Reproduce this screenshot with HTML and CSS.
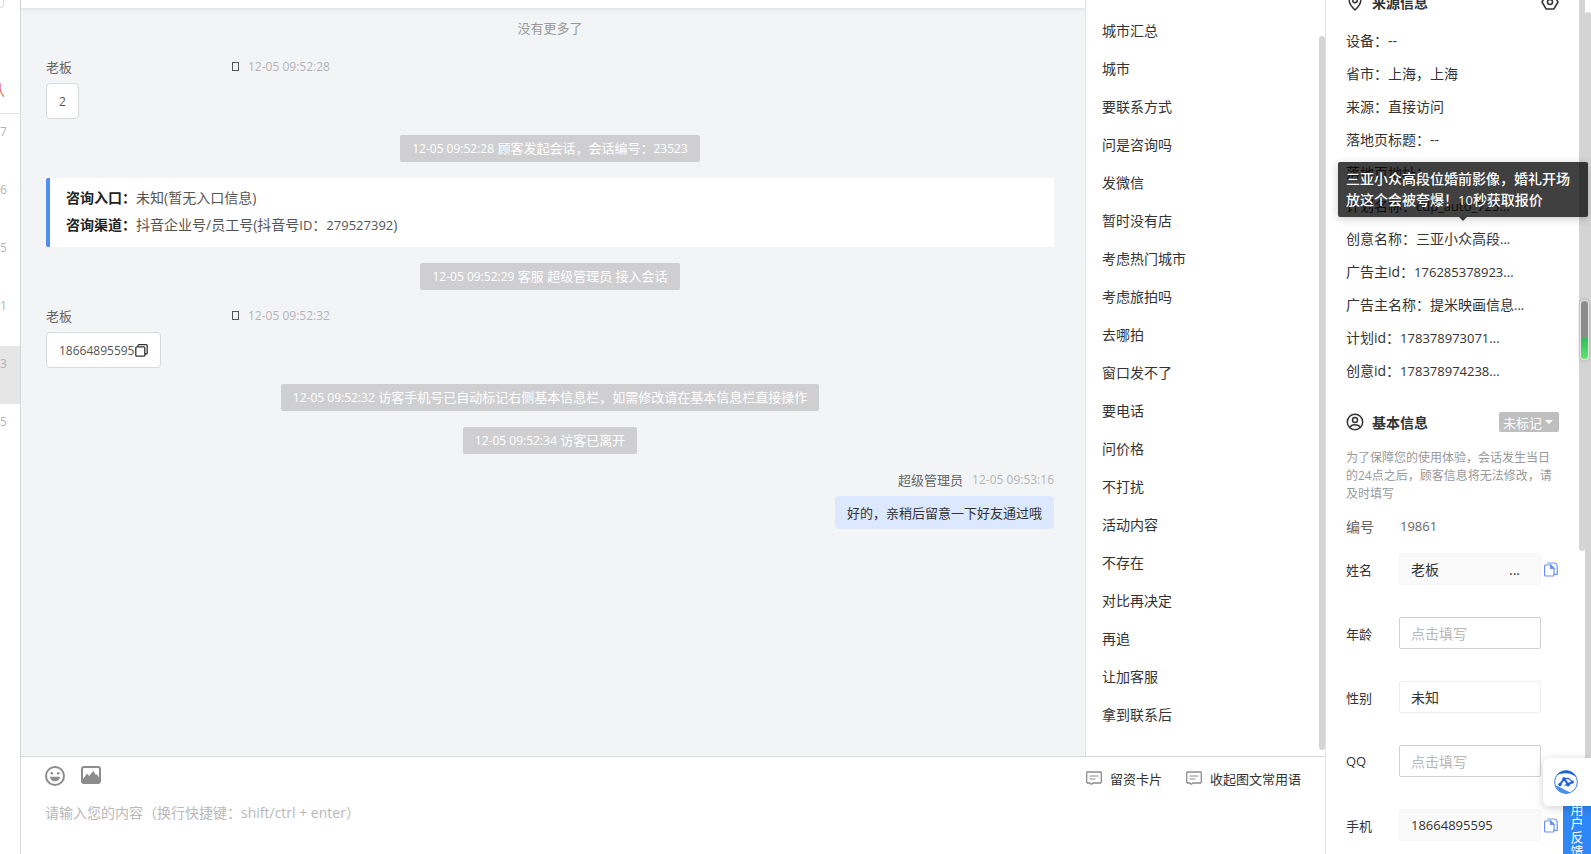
FILE: index.html
```
<!DOCTYPE html>
<html lang="zh-CN">
<head>
  <meta charset="UTF-8" />
  <title>在线客服</title>
  <link rel="stylesheet" href="styles.css">
</head>
<body>

  <div class="app">
    <aside class="sessions">
      <div class="session-search"></div>
      <div class="session-tab">认</div>
      <ul class="session-list">
        <li>7</li>
        <li>6</li>
        <li>5</li>
        <li>1</li>
        <li class="active">3</li>
        <li>5</li>
      </ul>
    </aside>

    <main class="main">
      <div class="workspace">
        <section class="chat">
          <div class="chat-header"></div>
          <div class="chat-body">
            <p class="no-more">没有更多了</p>

            <div class="msg">
              <div class="msg-meta"><span class="msg-name">老板</span><i class="device"></i><time>12-05 09:52:28</time></div>
              <div class="bubble"><span class="num">2</span></div>
            </div>

            <p class="system"><time>12-05 09:52:28</time> 顾客发起会话，会话编号：<span class="num">23523</span></p>

            <div class="entry-card">
              <p><b>咨询入口：</b>未知(暂无入口信息)</p>
              <p><b>咨询渠道：</b>抖音企业号/员工号(抖音号<span class="num">ID</span>：<span class="num">279527392</span>)</p>
            </div>

            <p class="system"><time>12-05 09:52:29</time> 客服 超级管理员 接入会话</p>

            <div class="msg">
              <div class="msg-meta"><span class="msg-name">老板</span><i class="device"></i><time>12-05 09:52:32</time></div>
              <div class="bubble"><span class="num">18664895595</span><button class="icon-btn" aria-label="复制">
                <svg width="14" height="13" viewBox="0 0 14 13" fill="none" stroke="#333" stroke-width="1.3"><rect x="1.8" y="2.8" width="9" height="9.4" rx="1"/><path d="M4 2.6V1.7a1 1 0 0 1 1-1h7.2a1 1 0 0 1 1 1V9a1 1 0 0 1-1 1H11"/></svg>
              </button></div>
            </div>

            <p class="system"><time>12-05 09:52:32</time> 访客手机号已自动标记右侧基本信息栏，如需修改请在基本信息栏直接操作</p>
            <p class="system"><time>12-05 09:52:34</time> 访客已离开</p>

            <div class="msg msg-own">
              <div class="msg-meta"><span>超级管理员</span><time>12-05 09:53:16</time></div>
              <div class="bubble">好的，亲稍后留意一下好友通过哦</div>
            </div>
          </div>
        </section>

        <section class="phrases">
          <ul>
            <li>城市汇总</li>
            <li>城市</li>
            <li>要联系方式</li>
            <li>问是咨询吗</li>
            <li>发微信</li>
            <li>暂时没有店</li>
            <li>考虑热门城市</li>
            <li>考虑旅拍吗</li>
            <li>去哪拍</li>
            <li>窗口发不了</li>
            <li>要电话</li>
            <li>问价格</li>
            <li>不打扰</li>
            <li>活动内容</li>
            <li>不存在</li>
            <li>对比再决定</li>
            <li>再追</li>
            <li>让加客服</li>
            <li>拿到联系后</li>
          </ul>
          <div class="phrases-scroll"></div>
        </section>
      </div>

      <section class="composer">
        <div class="toolbar">
          <button class="icon-btn" aria-label="表情">
            <svg width="20" height="20" viewBox="0 0 20 20"><circle cx="10" cy="10" r="9" fill="none" stroke="#8c8c8c" stroke-width="2"/><circle cx="6.8" cy="7.3" r="1.3" fill="#8c8c8c"/><circle cx="13.2" cy="7.3" r="1.3" fill="#8c8c8c"/><path d="M5 10.8h10a5 4.4 0 0 1-10 0z" fill="#8c8c8c"/></svg>
          </button>
          <button class="icon-btn" aria-label="图片">
            <svg width="20" height="20" viewBox="0 0 20 20"><rect x="1" y="1" width="18" height="16" rx="2" fill="none" stroke="#8c8c8c" stroke-width="2"/><path d="M2 13l4-5.5 2.200 2.600L12.300 5 15 9l1-.8 3 5.300V17H2z" fill="#8c8c8c"/></svg>
          </button>
          <span class="spacer"></span>
          <button class="tool">
            <svg width="16" height="14" viewBox="0 0 16 14" fill="none" stroke="#8c8c8c"><path d="M1.5 1h13a.8.8 0 0 1 .8.8v9.4a.8.8 0 0 1-.8.8H7l-1.6 1.3L3.8 12H1.5a.8.8 0 0 1-.8-.8V1.8A.8.8 0 0 1 1.5 1z" stroke-width="1.3"/><path d="M3.5 5h9M3.5 8h6"/></svg>
            留资卡片
          </button>
          <button class="tool">
            <svg width="16" height="14" viewBox="0 0 16 14" fill="none" stroke="#8c8c8c"><path d="M1.5 1h13a.8.8 0 0 1 .8.8v9.4a.8.8 0 0 1-.8.8H7l-1.6 1.3L3.8 12H1.5a.8.8 0 0 1-.8-.8V1.8A.8.8 0 0 1 1.5 1z" stroke-width="1.3"/><path d="M3.5 5h9M3.5 8h6"/></svg>
            收起图文常用语
          </button>
        </div>
        <textarea aria-label="消息内容" placeholder="请输入您的内容（换行快捷键：shift/ctrl + enter）"></textarea>
      </section>
    </main>

    <aside class="info">
      <div class="info-title source-title">
        <svg width="18" height="18" viewBox="0 0 18 18" fill="none" stroke="#333" stroke-width="1.5"><path d="M9 17C5 13.3 3.2 10.5 3.2 7.3a5.8 5.8 0 0 1 11.6 0C14.8 10.5 13 13.3 9 17z"/><circle cx="9" cy="7.5" r="2.2"/></svg>
        <h2>来源信息</h2>
        <button class="icon-btn" aria-label="设置">
          <svg width="18" height="18" viewBox="0 0 18 18" fill="none" stroke="#333" stroke-width="1.5"><path d="M5.2 2h7.6L17 9l-4.2 7H5.2L1 9z" stroke-linejoin="round"/><circle cx="9" cy="9" r="2.5"/></svg>
        </button>
      </div>

      <ul class="source-list">
        <li>设备：--</li>
        <li>省市：上海，上海</li>
        <li>来源：直接访问</li>
        <li>落地页标题：--</li>
        <li>落地页地址：</li>
        <li>计划名称：<span class="num">cdp_auto_725...</span></li>
        <li class="has-tip">创意名称：三亚小众高段<span class="num">...</span>
          <div class="tooltip" role="tooltip">三亚小众高段位婚前影像，婚礼开场放这个会被夸爆！<span class="num">10</span>秒获取报价</div>
        </li>
        <li>广告主id：<span class="num">176285378923...</span></li>
        <li>广告主名称：提米映画信息<span class="num">...</span></li>
        <li>计划id：<span class="num">178378973071...</span></li>
        <li>创意id：<span class="num">178378974238...</span></li>
      </ul>

      <div class="info-title">
        <svg width="18" height="18" viewBox="0 0 18 18" fill="none" stroke="#333" stroke-width="1.5"><circle cx="9" cy="9" r="7.7"/><circle cx="9" cy="7" r="2.5"/><path d="M3.7 14.4c1-1.9 2.8-2.7 5.3-2.7s4.3.8 5.3 2.7"/></svg>
        <h2>基本信息</h2>
        <button class="tag">未标记<i class="caret"></i></button>
      </div>
      <p class="hint">为了保障您的使用体验，会话发生当日的24点之后，顾客信息将无法修改，请及时填写</p>

      <div class="plain-row"><span>编号</span><span class="num">19861</span></div>

      <form class="fields">
        <div class="field">
          <label for="name">姓名</label>
          <div class="box readonly"><input id="name" type="text" value="老板" readonly><button type="button" class="more" aria-label="更多">...</button></div>
          <button type="button" class="icon-btn" aria-label="复制姓名">
            <svg width="14" height="15" viewBox="0 0 14 15" fill="none" stroke="#6b93f0" stroke-width="1.2"><path d="M1.6 3h5.2L10 6.200v6.800a1 1 0 0 1-1 1H1.600a1 1 0 0 1-1-1V4a1 1 0 0 1 1-1z"/><path d="M6.600 3v3.400H10z" fill="#6b93f0"/><path d="M3.200 1h6.400c2 0 3.600 1.300 3.600 3.200V12.400H10"/></svg>
          </button>
        </div>
        <div class="field">
          <label for="age">年龄</label>
          <div class="box"><input id="age" type="text" placeholder="点击填写"></div>
        </div>
        <div class="field">
          <label for="sex">性别</label>
          <div class="box light"><select id="sex"><option>未知</option></select></div>
        </div>
        <div class="field">
          <label for="qq">QQ</label>
          <div class="box"><input id="qq" type="text" placeholder="点击填写"></div>
        </div>
        <div class="field">
          <label for="phone">手机</label>
          <div class="box readonly"><input id="phone" class="num" type="text" value="18664895595" readonly></div>
          <button type="button" class="icon-btn" aria-label="复制手机">
            <svg width="14" height="15" viewBox="0 0 14 15" fill="none" stroke="#6b93f0" stroke-width="1.2"><path d="M1.6 3h5.2L10 6.200v6.800a1 1 0 0 1-1 1H1.600a1 1 0 0 1-1-1V4a1 1 0 0 1 1-1z"/><path d="M6.600 3v3.400H10z" fill="#6b93f0"/><path d="M3.200 1h6.400c2 0 3.600 1.300 3.600 3.200V12.400H10"/></svg>
          </button>
        </div>
      </form>

      <div class="info-scroll"></div>
      <div class="page-scroll"></div>
      <div class="meter"></div>

      <div class="float">
        <button class="assistant" aria-label="助手">
          <svg width="24" height="24" viewBox="0 0 24 24"><circle cx="12" cy="12" r="11.4" fill="#fff" stroke="#3a78e0" stroke-width="1"/><path d="M3 5A11.500 11.500 0 0 1 22.500 7.500C19 4.500 15.500 3.200 11.500 3.300 8 3.400 5.500 4.200 3 5z" fill="#1565d8"/><path d="M1 15.500A11.500 11.500 0 0 0 17 22.400C13.500 21.500 11.500 20.300 9 18.800 6.500 17.200 4 15.800 1 15.500z" fill="#4a90ee"/><path d="M6 14.500L10 8.700l4 5.600 4.500-2.300" fill="none" stroke="#1f63dd" stroke-width="2" stroke-linejoin="round"/><path d="M10 8.700l4.500-.4 4 3.700M10.500 15.500L14 14.300" fill="none" stroke="#1f63dd" stroke-width="1.200"/><circle cx="6" cy="14.500" r="1.700" fill="#1f63dd"/><circle cx="10" cy="8.700" r="1.700" fill="#1f63dd"/><circle cx="14" cy="14.500" r="2" fill="#1f63dd"/><circle cx="18.500" cy="12" r="1.500" fill="#1f63dd"/></svg>
        </button>
        <button class="feedback">用户反馈</button>
      </div>
    </aside>
  </div>

</body>
</html>
```
FILE: styles.css
```
* {
  box-sizing: border-box;
}

body {
  margin: 0;
  font-family: "Open Sans", "Noto Sans CJK SC", sans-serif;
  font-size: 14px;
  color: #333;
  background-color: #fff;
}

ul {
  list-style: none;
  margin: 0;
  padding: 0;
}

p,
h2 {
  margin: 0;
}

button,
input,
select,
textarea {
  font-family: inherit;
  font-size: 14px;
  color: inherit;
  background: none;
  border: none;
  padding: 0;
  outline: none;
}

button {
  cursor: pointer;
}

svg {
  display: block;
}

.num {
  font-size: 13px;
}

.icon-btn {
  display: flex;
}

.app {
  display: flex;
  height: 100vh;
  overflow: hidden;
}

/* sessions */
.sessions {
  flex: none;
  width: 21px;
  overflow: hidden;
  border-right: 1px solid #d5dadd;
}

.session-search {
  width: 4px;
  height: 8px;
  border: 1px solid #d9d9d9;
  border-width: 0 1px 1px 0;
  border-bottom-right-radius: 4px;
}

.session-tab {
  display: flex;
  justify-content: flex-end;
  align-items: center;
  height: 49px;
  margin-top: 57px;
  padding-right: 15px;
  border-bottom: 1px solid #e3e7ea;
  color: #e2685a;
}

.session-list li {
  height: 58px;
  padding: 8px 14px 0 0;
  text-align: right;
  font-size: 12px;
  line-height: 20px;
  color: #b5b5b5;
}

.session-list .active {
  background-color: #e6e6e6;
}

/* chat */
.main {
  flex: 1;
  min-width: 0;
  display: flex;
  flex-direction: column;
}

.workspace {
  flex: 1;
  min-height: 0;
  display: flex;
}

.chat {
  flex: 1;
  min-width: 0;
  display: flex;
  flex-direction: column;
  background-color: #f3f4f6;
}

.chat-header {
  height: 8px;
  background-color: #fff;
  box-shadow: 0 1px 5px rgba(0, 0, 0, 0.1);
}

.chat-body {
  display: flex;
  flex-direction: column;
  align-items: center;
  gap: 16px;
  padding: 10px 31px 0 25px;
  font-size: 13px;
}

.no-more {
  padding-bottom: 3px;
  line-height: 20px;
  color: #999;
}

.msg {
  align-self: stretch;
  display: flex;
  flex-direction: column;
  align-items: flex-start;
}

.msg-meta {
  display: flex;
  align-items: center;
  height: 19px;
  margin-bottom: 7px;
  color: #666;
}

.msg-name {
  width: 186px;
}

.msg-meta time {
  margin-left: 9px;
  color: #b5b5b5;
}

.device {
  width: 7px;
  height: 9px;
  border: 1px solid #555;
}

time,
.bubble .num,
.system .num {
  font-size: 12px;
}

.bubble {
  display: flex;
  align-items: center;
  height: 36px;
  padding: 0 12px;
  border: 1px solid #d5dadd;
  border-radius: 4px;
  background-color: #fff;
  color: #555;
}

.system {
  padding: 0 12px;
  border-radius: 2px;
  background-color: #cfcfd1;
  color: #fff;
  line-height: 27px;
}

.entry-card {
  align-self: stretch;
  padding: 6px 16px 8px;
  border-left: 4px solid #518ef2;
  border-radius: 2px;
  background-color: #fff;
  color: #555;
  font-size: 14px;
  line-height: 27px;
}

.entry-card b {
  color: #222;
}

.msg-own {
  align-items: flex-end;
}

.msg-own .bubble {
  height: 33px;
  padding: 0 11px;
  border-color: #dce8fd;
  background-color: #dce8fd;
  color: #333;
}

/* quick phrases */
.phrases {
  position: relative;
  flex: none;
  width: 240px;
  padding: 12px 16px;
  border-left: 1px solid #e2e5e8;
  overflow: hidden;
}

.phrases li {
  line-height: 38px;
}

.phrases-scroll {
  position: absolute;
  top: 36px;
  right: 0;
  bottom: 6px;
  width: 6px;
  border-radius: 3px;
  background-color: #d4d4d4;
}

/* composer */
.composer {
  padding: 9px 24px 0;
  border-top: 1px solid #d5dadd;
}

.toolbar {
  display: flex;
  align-items: flex-start;
  gap: 16px;
}

.spacer {
  flex: 1;
}

.tool {
  display: flex;
  align-items: center;
  gap: 8px;
  height: 24px;
  margin-left: 8px;
  font-size: 13px;
}

.composer textarea {
  display: block;
  width: 100%;
  height: 52px;
  margin-top: 12px;
  resize: none;
  line-height: 22px;
}

::placeholder {
  color: #b8b8b8;
}

/* customer info */
.info {
  position: relative;
  flex: none;
  width: 266px;
  padding: 0 32px 0 20px;
  border-left: 1px solid #e2e5e8;
}

.info-title {
  display: flex;
  align-items: center;
  height: 22px;
}

.info-title h2 {
  flex: 1;
  margin-left: 8px;
  font-size: 14px;
}

/* the panel is scrolled, only the lower half of this row shows */
.source-title {
  margin: -9px 0 11px;
}

.source-list {
  margin-bottom: 24px;
}

.source-list li {
  height: 33px;
  line-height: 33px;
  white-space: nowrap;
}

.has-tip {
  position: relative;
}

.tooltip {
  position: absolute;
  z-index: 2;
  left: -8px;
  bottom: 38px;
  width: 250px;
  padding: 6px 8px;
  border-radius: 2px;
  background-color: rgba(0, 0, 0, 0.75);
  box-shadow: 0 2px 8px rgba(0, 0, 0, 0.2);
  color: #fff;
  font-weight: 500;
  line-height: 21px;
  white-space: normal;
}

.tooltip::after {
  content: "";
  position: absolute;
  top: 100%;
  left: 50%;
  margin-left: -4px;
  border: 4px solid transparent;
  border-top-color: rgba(0, 0, 0, 0.75);
}

.tag {
  display: flex;
  align-items: center;
  gap: 3px;
  height: 20px;
  padding: 0 6px 0 4px;
  border-radius: 2px;
  background-color: #bfbfbf;
  color: #fff;
  font-size: 13px;
}

.caret {
  border: 4px solid transparent;
  border-top-color: #fff;
  border-bottom: none;
}

.hint {
  margin: 16px 0 6px;
  color: #999;
  font-size: 12px;
  line-height: 18px;
}

.plain-row {
  display: flex;
  align-items: center;
  height: 34px;
  margin-bottom: 10px;
  color: #666;
}

.plain-row span:first-child {
  width: 54px;
}

.fields {
  display: flex;
  flex-direction: column;
  gap: 32px;
}

.field {
  display: flex;
  align-items: center;
  height: 32px;
}

.field label {
  width: 53px;
  font-size: 13px;
}

.field .icon-btn {
  margin-left: 3px;
}

.box {
  display: flex;
  align-items: center;
  width: 142px;
  height: 32px;
  padding: 0 11px;
  border: 1px solid #d0d0d0;
  border-radius: 2px;
}

.box.light {
  border-color: #eee;
}

.box.readonly {
  border-color: #f5f5f5;
  background-color: #fafafa;
}

.box input,
.box select {
  flex: 1;
  min-width: 0;
  width: 100%;
  appearance: none;
}

.box .num {
  font-size: 13px;
}

.more {
  margin-right: 9px;
}

/* scroll bars and floating widgets */
.info-scroll,
.page-scroll {
  position: absolute;
  width: 6px;
  background-color: #d4d4d4;
}

.info-scroll {
  top: 0;
  right: 6px;
  height: 551px;
  border-radius: 0 0 3px 3px;
}

.page-scroll {
  top: 12px;
  right: 0;
  bottom: 90px;
  border-radius: 3px 3px 0 0;
}

.meter {
  position: absolute;
  top: 300px;
  right: 2px;
  width: 9px;
  height: 60px;
  border: 1px solid #e6e6e6;
  border-radius: 4px;
  background: linear-gradient(#8c8c8c 62%, #2fbf5b 64%, #5fe36f);
  box-shadow: 0 0 4px rgba(0, 0, 0, 0.2);
}

.float {
  position: absolute;
  right: 0;
  bottom: 0;
  display: flex;
  flex-direction: column;
  align-items: flex-end;
}

.assistant {
  position: relative;
  z-index: 1;
  display: flex;
  align-items: center;
  width: 48px;
  height: 48px;
  padding-left: 11px;
  border-radius: 6px 0 0 6px;
  background-color: #fff;
  box-shadow: 0 2px 10px rgba(0, 0, 0, 0.18);
}

/* tucked under the assistant button */
.feedback {
  width: 28px;
  height: 52px;
  margin-top: -4px;
  overflow: hidden;
  padding: 0 7px;
  background-color: #2f86f6;
  color: #fff;
  font-size: 13px;
  line-height: 14px;
}
```
